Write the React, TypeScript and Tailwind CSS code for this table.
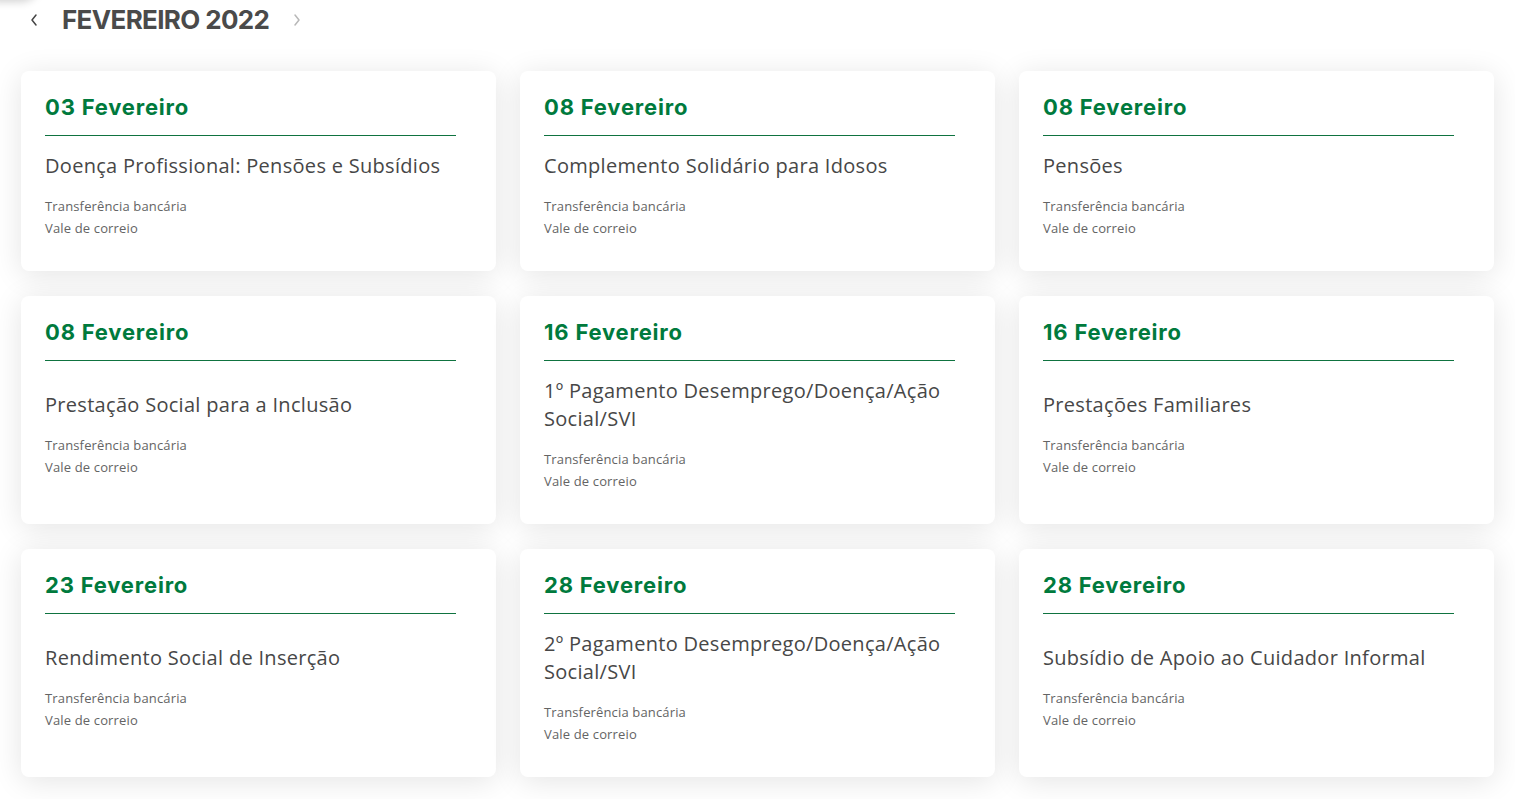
import React from "react";

type Item = { date: string; title: string };

const items: Item[] = [
  { date: "03 Fevereiro", title: "Doença Profissional: Pensões e Subsídios" },
  { date: "08 Fevereiro", title: "Complemento Solidário para Idosos" },
  { date: "08 Fevereiro", title: "Pensões" },
  { date: "08 Fevereiro", title: "Prestação Social para a Inclusão" },
  { date: "16 Fevereiro", title: "1º Pagamento Desemprego/Doença/Ação Social/SVI" },
  { date: "16 Fevereiro", title: "Prestações Familiares" },
  { date: "23 Fevereiro", title: "Rendimento Social de Inserção" },
  { date: "28 Fevereiro", title: "2º Pagamento Desemprego/Doença/Ação Social/SVI" },
  { date: "28 Fevereiro", title: "Subsídio de Apoio ao Cuidador Informal" },
];

function Card({ item }: { item: Item }) {
  return (
    <div className="flex flex-col rounded-[8px] bg-white pl-6 pr-10 pt-5 shadow-[0_4px_30px_rgba(0,0,0,0.11)]">
      <div className="font-['Inter',sans-serif] text-[22px] font-bold leading-8 tracking-[0.8px] text-[#007a3d]">
        {item.date}
      </div>
      <div className="mt-3 h-px bg-[#0f7340]" />
      <div className="flex flex-1 flex-col justify-center pb-8 pt-4 font-['Open_Sans',sans-serif]">
        <div className="text-[20px] leading-7 tracking-[0.3px] text-[#474747]">{item.title}</div>
        <div className="mt-[15px] text-[13px] leading-[22px] tracking-[0.15px] text-[#646464]">
          <div>Transferência bancária</div>
          <div>Vale de correio</div>
        </div>
      </div>
    </div>
  );
}

export default function App() {
  return (
    <div className="relative min-h-[799px] overflow-hidden bg-white font-['Open_Sans',sans-serif]">
      <div className="pointer-events-none absolute -left-6 -top-10 h-10 w-16 rounded-full shadow-[0_2px_8px_rgba(0,0,0,0.18)]" />
      <div className="flex h-[39px] items-center pl-[29px]">
        <svg width="10" height="14" viewBox="0 0 10 14" className="text-[#444]">
          <path d="M7 2 L3 7 L7 12" fill="none" stroke="currentColor" strokeWidth="1.5" strokeLinecap="round" strokeLinejoin="round" />
        </svg>
        <h1 className="ml-[23px] font-['Inter',sans-serif] text-[26px] font-bold leading-none tracking-[-0.65px] text-[#4a4a4a]">
          FEVEREIRO 2022
        </h1>
        <svg width="10" height="14" viewBox="0 0 10 14" className="ml-[23px] text-[#b8b8b8]">
          <path d="M3 2 L7 7 L3 12" fill="none" stroke="currentColor" strokeWidth="1.5" strokeLinecap="round" strokeLinejoin="round" />
        </svg>
      </div>
      <div className="grid grid-cols-3 gap-x-6 gap-y-[25px] px-[21px] pt-[32px] pb-6">
        {items.map((it, i) => (
          <Card key={i} item={it} />
        ))}
      </div>
    </div>
  );
}
